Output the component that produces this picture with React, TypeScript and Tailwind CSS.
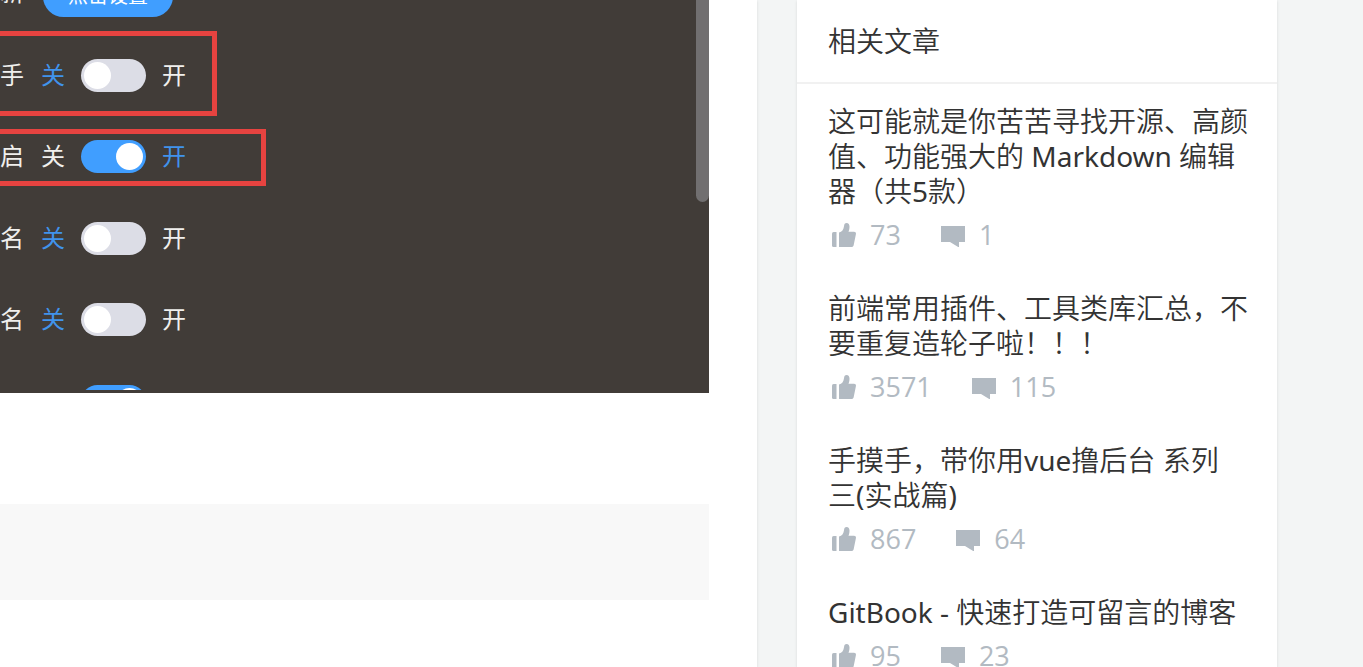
import React from 'react';

type Article = { title: string; likes: number; comments: number };

const articles: Article[] = [
  { title: '这可能就是你苦苦寻找开源、高颜值、功能强大的 Markdown 编辑器（共5款）', likes: 73, comments: 1 },
  { title: '前端常用插件、工具类库汇总，不要重复造轮子啦！！！', likes: 3571, comments: 115 },
  { title: '手摸手，带你用vue撸后台 系列\n三(实战篇)', likes: 867, comments: 64 },
  { title: 'GitBook - 快速打造可留言的博客', likes: 95, comments: 23 },
];

function ThumbIcon() {
  return (
    <svg width="24" height="24" viewBox="0 0 24 24" fill="currentColor" aria-hidden="true">
      <path d="M1.6 9H4.5V24H1.6Q0 24 0 22.4V10.6Q0 9 1.6 9Z" />
      <path d="M7 24V9.6C10 8.8 11.6 6.5 12 3.2C12.2 1 13 0 14.5 0C16.6 0 17.5 1.6 17.5 3.6C17.5 5.6 17.2 7.2 16.5 8.8H22C23.5 8.8 24.2 9.8 23.9 11.2L21.7 22C21.4 23.4 20.6 24 19.4 24Z" />
    </svg>
  );
}

function CommentIcon() {
  return (
    <svg width="24" height="24" viewBox="0 0 24 24" fill="currentColor" aria-hidden="true">
      <path d="M0 3H24V19H18V24.5L9 19H0Z" />
    </svg>
  );
}

/* Latin runs are set in regular weight, Chinese text a little lighter. */
function Title({ text }: { text: string }) {
  return (
    <>
      {text.split(/([ -~]+)/).map((run, i) =>
        i % 2 === 1 ? (
          <span key={i} className="font-normal">{run}</span>
        ) : (
          run
        ),
      )}
    </>
  );
}

function Toggle({ id, on, label }: { id: string; on: boolean; label?: string }) {
  return (
    <input
      id={id}
      type="checkbox"
      role="switch"
      aria-label={label}
      defaultChecked={on}
      className="flex h-[33px] w-[65px] shrink-0 appearance-none items-center rounded-full bg-[#dcdde6] px-[3px] before:block before:size-[27px] before:rounded-full before:bg-white checked:justify-end checked:bg-[#409eff]"
    />
  );
}

function SwitchRow({ id, name, on }: { id: string; name: string; on: boolean }) {
  return (
    <div className="flex h-[33px] items-center text-[24px] leading-[29px] text-[#f0efed]">
      <label htmlFor={id} className="w-[41px] pb-1">{name}</label>
      <span className={on ? 'w-10 pb-1' : 'w-10 pb-1 text-[#4093ec]'}>关</span>
      <Toggle id={id} on={on} />
      <span className={on ? 'ml-4 pb-1 text-[#4093ec]' : 'ml-4 pb-1'}>开</span>
    </div>
  );
}

export default function App() {
  return (
    <div className="flex h-screen items-stretch gap-10 overflow-hidden bg-[#f3f5f5] pr-[86px] font-['Noto_Sans','Noto_Sans_CJK_SC',sans-serif] text-[#333]">
      <main className="min-w-0 flex-1 bg-white pr-12 shadow-sm">
        <div className="flex items-start bg-[#413c38] pb-[3px] font-['Noto_Sans_CJK_SC',sans-serif]">
          <div className="min-w-0 flex-1">
            <div className="flex h-[17px] items-end overflow-hidden text-[24px] leading-[33px] text-[#f0efed]">
              <span className="w-[43px] pb-[10px]">新</span>
              <button type="button" className="h-[41px] w-[130px] shrink-0 rounded-full bg-[#409eff] pb-1 text-[20px] leading-[37px] text-white">
                点击设置
              </button>
            </div>
            <div className="mt-[14px] h-[85px] w-[217px] border-y-[5px] border-r-[5px] border-[#e64340] pt-[23px]">
              <SwitchRow id="assistant" name="手" on={false} />
            </div>
            <div className="mt-[13px] h-[57px] w-[266px] border-y-[5px] border-r-[5px] border-[#e64340] pt-[6px]">
              <SwitchRow id="enable" name="启" on />
            </div>
            <div className="mt-9">
              <SwitchRow id="name-a" name="名" on={false} />
            </div>
            <div className="mt-12">
              <SwitchRow id="name-b" name="名" on={false} />
            </div>
            <div className="mt-[49px] h-[5px] overflow-hidden pl-[81px]">
              <Toggle id="more" on label="开" />
            </div>
          </div>
          <div className="h-[202px] w-[13px] rounded-b-full bg-[#716f70]" />
        </div>
        <div className="mt-[111px] h-24 bg-[#f8f8f8]" />
      </main>

      <aside className="w-[480px] shrink-0 bg-white shadow-sm">
        <h2 className="border-b-2 border-[#f1f1f1] px-[31px] py-5 text-[28px] leading-[42px] font-[350]">相关文章</h2>
        <ul className="pt-5">
          {articles.map((a) => (
            <li key={a.title} className="mb-[38px] pr-[25px] pl-[31px]">
              <a href="#" className="block text-[28px] leading-[35px] font-[350] whitespace-pre-line">
                <Title text={a.title} />
              </a>
              <div className="mt-2 flex h-9 items-center font-['Open_Sans',sans-serif] text-[27px] leading-9 text-[#b2bac2]">
                <span className="ml-1 flex items-center gap-[14px]">
                  <ThumbIcon />
                  {a.likes}
                </span>
                <span className="ml-10 flex items-center gap-[14px]">
                  <CommentIcon />
                  {a.comments}
                </span>
              </div>
            </li>
          ))}
        </ul>
      </aside>
    </div>
  );
}
